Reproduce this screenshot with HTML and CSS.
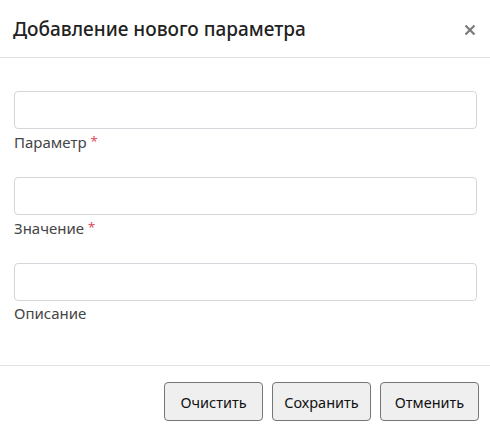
FILE: index.html
```html
<!DOCTYPE html>
<html lang="ru">
<head>
<meta charset="utf-8">
<title>Добавление нового параметра</title>
<link rel="stylesheet" href="styles.css">
</head>
<body>
<div class="modal">
  <div class="modal-header">
    <h5 class="modal-title">Добавление нового параметра</h5>
    <button class="close" type="button" aria-label="Закрыть">
      <svg width="12" height="12" viewBox="0 0 12 12"><path d="M1.5 1.5 L10.5 10.5 M10.5 1.5 L1.5 10.5" stroke="#7a7a7a" stroke-width="2.2" stroke-linecap="butt"/></svg>
    </button>
  </div>
  <div class="modal-body">
    <div class="field">
      <input class="input" type="text">
      <label class="label">Параметр <span class="req">*</span></label>
    </div>
    <div class="field">
      <input class="input" type="text">
      <label class="label">Значение <span class="req">*</span></label>
    </div>
    <div class="field">
      <input class="input" type="text">
      <label class="label">Описание</label>
    </div>
  </div>
  <div class="modal-footer">
    <button class="btn" type="button">Очистить</button>
    <button class="btn" type="button">Сохранить</button>
    <button class="btn" type="button">Отменить</button>
  </div>
</div>
</body>
</html>
```
FILE: styles.css
```css
html, body {
  margin: 0;
  padding: 0;
  background: #ffffff;
}
body {
  font-family: "Noto Sans", "Open Sans", sans-serif;
  color: #212529;
}
.modal {
  width: 490px;
  height: 437px;
  display: flex;
  flex-direction: column;
}
.modal-header {
  height: 57px;
  flex-shrink: 0;
  border-bottom: 1px solid #e3e3e3;
  display: flex;
  align-items: center;
  justify-content: space-between;
  padding: 0 14px 0 13px;
}
.modal-title {
  margin: 0;
  font-size: 19px;
  font-weight: 500;
  color: #222;
  line-height: 24px;
}
.close {
  border: 0;
  background: transparent;
  padding: 0;
  width: 12px;
  height: 12px;
  display: flex;
  margin-top: 2px;
}
.modal-body {
  padding: 33px 13px 0 14px;
  height: 307px;
  flex-shrink: 0;
  box-sizing: border-box;
  display: flex;
  flex-direction: column;
}
.field {
  display: flex;
  flex-direction: column;
  height: 86px;
  flex-shrink: 0;
}
.input {
  width: 100%;
  height: 38px;
  box-sizing: border-box;
  border: 1px solid #d3d6da;
  border-radius: 4px;
  margin: 0;
  padding: 6px 12px;
  font: inherit;
}
.label {
  font-size: 15px;
  line-height: 20px;
  margin-top: 2px;
  color: #454545;
}
.req {
  color: #e0495b;
  font-size: 13px;
  vertical-align: 2px;
}
.modal-footer {
  border-top: 1px solid #e3e3e3;
  flex: 1;
  display: flex;
  justify-content: flex-end;
  align-items: flex-start;
  gap: 9px;
  padding: 16px 11px 0 0;
}
.btn {
  width: 99px;
  height: 39px;
  box-sizing: border-box;
  background: #efefef;
  border: 1px solid #767676;
  border-radius: 4px;
  font-family: "Noto Sans", "Open Sans", sans-serif;
  font-size: 14.5px;
  color: #111;
  padding: 0;
}
```
